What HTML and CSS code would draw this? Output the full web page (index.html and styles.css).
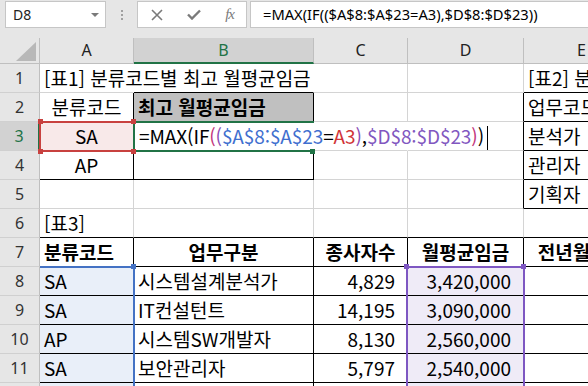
FILE: index.html
```html
<!DOCTYPE html>
<html lang="ko">
<head>
  <meta charset="UTF-8">
  <title>Excel - MAX(IF)</title>
  <link rel="stylesheet" href="styles.css">
</head>
<body>
  <div class="fbar">
    <div class="namebox">
      <span>D8</span>
      <svg class="caret" width="8" height="4" viewBox="0 0 8 4"><path d="M0 0h8L4 4z" fill="#7a7a7a"/></svg>
    </div>
    <div class="grip"><i></i><i></i><i></i></div>
    <div class="fbtns">
      <svg width="12" height="12" viewBox="0 0 12 12"><path d="M1 1l10 10M11 1L1 11" stroke="#7a7a7a" stroke-width="1.6" fill="none"/></svg>
      <svg width="14" height="11" viewBox="0 0 14 11"><path d="M1 5.5l4 4L13 1.5" stroke="#7a7a7a" stroke-width="2.4" fill="none"/></svg>
      <span class="fx">fx</span>
    </div>
    <div class="finput">=MAX(IF(($A$8:$A$23=A3),$D$8:$D$23))</div>
  </div>

  <div class="sheet">
    <div class="corner"><svg width="20" height="19" viewBox="0 0 20 19"><path d="M20 0v19H0z" fill="#b8b8b8"/></svg></div>
    <div class="ch">A</div>
    <div class="ch sel">B</div>
    <div class="ch">C</div>
    <div class="ch">D</div>
    <div class="ch">E</div>

    <!-- row 1 -->
    <div class="rh">1</div>
    <div class="c nr">[표1] 분류코드별 최고 월평균임금</div>
    <div class="c nr b"></div>
    <div class="c"></div>
    <div class="c"></div>
    <div class="c b">[표2] 분류별 평균임금</div>

    <!-- row 2 -->
    <div class="rh">2</div>
    <div class="c r ctr">분류코드</div>
    <div class="c r b hd">최고 월평균임금</div>
    <div class="c"></div>
    <div class="c r"></div>
    <div class="c b">업무코드</div>

    <!-- row 3 -->
    <div class="rh on">3</div>
    <div class="c r ctr pink">SA</div>
    <div class="c nr b edit">=MAX(IF<span class="p2">(</span><span class="p3">(</span><span class="rb">$A$8:$A$23</span>=<span class="rr">A3</span><span class="p3">)</span>,<span class="rp">$D$8:$D$23</span><span class="p2">)</span>)<span class="cursor"></span></div>
    <div class="c nr"></div>
    <div class="c r"></div>
    <div class="c b">분석가</div>

    <!-- row 4 -->
    <div class="rh">4</div>
    <div class="c r b ctr">AP</div>
    <div class="c r b"></div>
    <div class="c"></div>
    <div class="c r"></div>
    <div class="c b">관리자</div>

    <!-- row 5 -->
    <div class="rh">5</div>
    <div class="c"></div>
    <div class="c"></div>
    <div class="c"></div>
    <div class="c r"></div>
    <div class="c b">기획자</div>

    <!-- row 6 -->
    <div class="rh">6</div>
    <div class="c b">[표3]</div>
    <div class="c b"></div>
    <div class="c b"></div>
    <div class="c b"></div>
    <div class="c b"></div>

    <!-- row 7 -->
    <div class="rh">7</div>
    <div class="c r b bold">분류코드</div>
    <div class="c r b bold ctr">업무구분</div>
    <div class="c r b bold ctr">종사자수</div>
    <div class="c r b bold ctr">월평균임금</div>
    <div class="c r b bold ctr">전년월평균</div>

    <!-- rows 8-12 -->
    <div class="rh">8</div>
    <div class="c r b blue">SA</div>
    <div class="c r b">시스템설계분석가</div>
    <div class="c r b num">4,829</div>
    <div class="c r b num lav">3,420,000</div>
    <div class="c r b"></div>

    <div class="rh">9</div>
    <div class="c r b blue">SA</div>
    <div class="c r b">IT컨설턴트</div>
    <div class="c r b num">14,195</div>
    <div class="c r b num lav">3,090,000</div>
    <div class="c r b"></div>

    <div class="rh">10</div>
    <div class="c r b blue">AP</div>
    <div class="c r b">시스템SW개발자</div>
    <div class="c r b num">8,130</div>
    <div class="c r b num lav">2,560,000</div>
    <div class="c r b"></div>

    <div class="rh">11</div>
    <div class="c r b blue">SA</div>
    <div class="c r b">보안관리자</div>
    <div class="c r b num">5,797</div>
    <div class="c r b num lav">2,540,000</div>
    <div class="c r b"></div>

    <div class="rh">12</div>
    <div class="c r b blue"></div>
    <div class="c r b"></div>
    <div class="c r b"></div>
    <div class="c r b lav"></div>
    <div class="c r b"></div>

    <!-- range highlights drawn over the cells -->
    <div class="hl hl-red"></div>
    <div class="hl hl-green"></div>
    <div class="hl hl-blue"></div>
    <div class="hl hl-purple"></div>
    <i class="sq red" style="left:38px;top:81px"></i>
    <i class="sq red" style="left:131px;top:81px"></i>
    <i class="sq red" style="left:38px;top:111px"></i>
    <i class="sq red" style="left:131px;top:111px"></i>
    <i class="sq green" style="left:310px;top:111px"></i>
    <i class="sq blue" style="left:131px;top:226px"></i>
    <i class="sq purple" style="left:404px;top:226px"></i>
    <i class="sq purple" style="left:521px;top:226px"></i>
  </div>
</body>
</html>
```

FILE: styles.css
```css
body {
  margin: 0;
  width: 588px;
  height: 386px;
  overflow: hidden;
  background: #e6e6e6;
  font-family: "Noto Sans CJK KR", sans-serif;
}

/* formula bar */
.fbar {
  display: flex;
  height: 27px;
  padding-top: 1px;
  font-family: "Noto Sans", sans-serif;
}

.namebox,
.fbtns,
.finput {
  box-sizing: border-box;
  background: #fff;
  border: 1px solid #c6c6c6;
}

.namebox {
  width: 101px;
  margin-left: 5px;
  display: flex;
  align-items: center;
  justify-content: space-between;
  padding: 0 6px 0 7px;
  font-size: 14px;
  color: #222;
}

.grip {
  width: 31px;
  display: flex;
  flex-direction: column;
  align-items: center;
  justify-content: center;
  gap: 2px;
}

.grip i {
  width: 2px;
  height: 2px;
  background: #a0a0a0;
}

.fbtns {
  width: 110px;
  display: flex;
  align-items: center;
  padding: 0 12px 0 13px;
  justify-content: space-between;
}

.fx {
  font-family: "Liberation Serif", serif;
  font-style: italic;
  font-size: 15px;
  color: #7a7a7a;
  letter-spacing: -1px;
}

.finput {
  flex: 1;
  margin-left: 3px;
  border-right: none;
  padding-left: 12px;
  font-size: 14.7px;
  line-height: 24px;
  color: #000;
  white-space: nowrap;
}

/* grid */
.sheet {
  position: relative;
  margin-top: 10px;
  display: grid;
  grid-template-columns: 40px 94px 180px 94px 116px 116px;
  grid-template-rows: 26px repeat(12, 29px);
  background: #fff;
}

.corner,
.ch,
.rh {
  box-sizing: border-box;
  background: #e6e6e6;
  border-right: 1px solid #bfbfbf;
  border-bottom: 1px solid #bfbfbf;
  font-family: "Noto Sans", sans-serif;
  color: #333;
  text-align: center;
}

.corner {
  display: flex;
  justify-content: flex-end;
  align-items: flex-end;
  padding: 0 3px 2px 0;
}

.ch {
  font-size: 16px;
  line-height: 25px;
  color: #222;
}

.ch.sel {
  background: #d2d2d2;
  color: #217346;
  border-bottom: 2px solid #217346;
}

.rh {
  font-size: 16px;
  line-height: 28px;
  border-bottom-color: #d0d0d0;
}

.rh.on {
  background: #d2d2d2;
  color: #217346;
  border-right: 2px solid #217346;
}

.c {
  box-sizing: border-box;
  border-right: 1px solid #d4d4d4;
  border-bottom: 1px solid #d4d4d4;
  padding: 0 4px;
  font-size: 19px;
  line-height: 28px;
  color: #000;
  white-space: nowrap;
}

.r { border-right-color: #000; }
.b { border-bottom-color: #000; }
.nr { border-right-color: transparent; }

.ctr { text-align: center; }
.num { text-align: right; padding-right: 12px; }
.bold { font-weight: 700; }

.hd {
  background: #c0c0c0;
  font-weight: 700;
}

.pink { background: #f8e9e9; }
.blue { background: #e9eff9; }
.lav { background: #efebf7; }

/* in-cell formula editor */
.edit {
  position: relative;
  z-index: 2;
  padding-left: 5px;
  letter-spacing: -0.1px;
}

.p2 { color: #c2337a; }
.p3 { color: #8a4bb5; }
.rb { color: #3f6fcf; }
.rr { color: #d13438; }
.rp { color: #8157c0; }

.cursor {
  display: inline-block;
  width: 1px;
  height: 24px;
  margin-left: 3px;
  background: #000;
  vertical-align: -6px;
}

/* range highlights */
.hl {
  position: absolute;
  box-sizing: border-box;
  border: 2px solid;
  z-index: 3;
}

.hl-red {
  left: 39px;
  top: 83px;
  width: 96px;
  height: 31px;
  border-color: #c8413f;
}

.hl-green {
  left: 133px;
  top: 83px;
  width: 181px;
  height: 31px;
  border-color: #217346;
  border-right: none;
}

.hl-blue {
  left: 40px;
  top: 228px;
  width: 95px;
  height: 200px;
  border-color: #4472c4;
  border-left: none;
}

.hl-purple {
  left: 406px;
  top: 228px;
  width: 119px;
  height: 200px;
  border-color: #7e57c2;
}

.sq {
  position: absolute;
  width: 5px;
  height: 5px;
  z-index: 4;
}

.sq.red { background: #c8413f; }
.sq.green { background: #217346; }
.sq.blue { background: #4472c4; }
.sq.purple { background: #7e57c2; }
```
